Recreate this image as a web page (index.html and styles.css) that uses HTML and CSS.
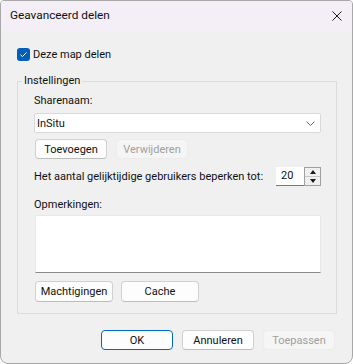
FILE: index.html
```html
<!DOCTYPE html>
<html lang="nl">
<head>
  <meta charset="UTF-8" />
  <title>Geavanceerd delen</title>
  <link rel="stylesheet" href="styles.css">
</head>
<body>
  <div class="dialog">
    <div class="titlebar">
      <span class="title">Geavanceerd delen</span>
      <span class="close">
        <svg width="10" height="10" viewBox="0 0 10 10"><path d="M0.5 0.5 L9.5 9.5 M9.5 0.5 L0.5 9.5" stroke="#1a1a1a" stroke-width="1" fill="none"/></svg>
      </span>
    </div>
    <div class="content">
      <label class="check-row">
        <span class="checkbox">
          <svg width="13" height="13" viewBox="0 0 13 13"><path d="M3.5 6.8 L5.5 8.6 L9.5 4.4" stroke="#fff" stroke-width="1" fill="none"/></svg>
        </span>
        Deze map delen
      </label>

      <fieldset class="group">
        <legend>Instellingen</legend>
        <div class="label">Sharenaam:</div>
        <div class="combo">
          <span>InSitu</span>
          <svg width="9" height="5" viewBox="0 0 9 5"><path d="M0.5 0.5 L4.5 4.5 L8.5 0.5" stroke="#666" stroke-width="1" fill="none"/></svg>
        </div>
        <div class="btn-row">
          <button class="btn">Toevoegen</button>
          <button class="btn" disabled>Verwijderen</button>
        </div>
        <div class="limit-row">
          <span>Het aantal gelijktijdige gebruikers beperken tot:</span>
          <div class="spinner">
            <span class="spin-value">20</span>
            <span class="spin-arrows">
              <span class="arrow up"></span>
              <span class="arrow down"></span>
            </span>
          </div>
        </div>
        <div class="label remarks-label">Opmerkingen:</div>
        <div class="remarks"></div>
        <div class="btn-row wide">
          <button class="btn">Machtigingen</button>
          <button class="btn">Cache</button>
        </div>
      </fieldset>

      <div class="footer">
        <button class="btn default">OK</button>
        <button class="btn">Annuleren</button>
        <button class="btn" disabled>Toepassen</button>
      </div>
    </div>
  </div>
</body>
</html>
```

FILE: styles.css
```css
body {
  margin: 0;
  font-family: Roboto, "Noto Sans", sans-serif;
  font-size: 11px;
  color: #111111;
  background: #ffffff;
}
.dialog {
  width: 353px;
  height: 364px;
  box-sizing: border-box;
  border: 1px solid #a8a8a8;
  border-radius: 4px 4px 8px 8px;
  background: #f0f0f0;
  overflow: hidden;
}
.titlebar {
  height: 30px;
  background: #f4eef6;
  display: flex;
  align-items: center;
  justify-content: space-between;
  padding: 0 10px 0 9px;
}
.title {
  font-size: 11.8px;
  line-height: 16px;
  margin-top: -2px;
}
.close {
  display: flex;
  margin-top: -1px;
}
.content {
  padding: 17px 15px 0 16px;
}
.check-row {
  display: flex;
  align-items: center;
  gap: 3px;
  height: 13px;
  line-height: 16px;
}
.checkbox {
  width: 13px;
  height: 13px;
  border-radius: 3px;
  background: #005fb8;
  display: flex;
}
.group {
  margin: 12px 0 0 0;
  padding: 4px 15px 11px 16px;
  border: 1px solid #dcdcdc;
  min-width: 0;
}
.group legend {
  padding: 0 2px;
  margin-left: -12px;
  line-height: 16px;
}
.label {
  line-height: 16px;
}
.combo {
  margin-top: 4px;
  height: 20px;
  box-sizing: border-box;
  background: #ffffff;
  border: 1px solid #d9d9d9;
  border-radius: 2px;
  display: flex;
  align-items: center;
  justify-content: space-between;
  padding: 0 5px 0 2px;
}
.btn {
  font-family: inherit;
  font-size: 11px;
  color: #111111;
  width: 72px;
  height: 20px;
  padding: 0;
  background: #fdfdfd;
  border: 1px solid #d0d0d0;
  border-bottom-color: #bdbdbd;
  border-radius: 4px;
}
.btn:disabled {
  background: #f5f5f5;
  border-color: #ececec;
  color: #a0a0a0;
}
.btn.default {
  border: 1px solid #0067c0;
}
.btn-row {
  display: flex;
  gap: 9px;
  margin-top: 6px;
  padding-left: 1px;
}
.btn-row.wide {
  margin-top: 8px;
  gap: 8px;
}
.btn-row.wide .btn {
  width: 78px;
  height: 21px;
}
.limit-row {
  margin-top: 8px;
  display: flex;
  align-items: center;
  justify-content: space-between;
  line-height: 16px;
  white-space: nowrap;
}
.spinner {
  display: flex;
  height: 19px;
}
.spin-value {
  width: 28px;
  background: #ffffff;
  border-bottom: 1px solid #7a7a7a;
  box-sizing: border-box;
  padding-left: 5px;
  line-height: 18px;
}
.spin-arrows {
  width: 17px;
  box-sizing: border-box;
  border: 1px solid #a0a0a0;
  background: #f0f0f0;
  display: flex;
  flex-direction: column;
}
.arrow {
  flex: 1;
  display: flex;
  align-items: center;
  justify-content: center;
}
.arrow.up {
  border-bottom: 1px solid #c8c8c8;
}
.arrow.up::before {
  content: "";
  border-left: 3px solid transparent;
  border-right: 3px solid transparent;
  border-bottom: 4px solid #1a1a1a;
}
.arrow.down::before {
  content: "";
  border-left: 3px solid transparent;
  border-right: 3px solid transparent;
  border-top: 4px solid #1a1a1a;
}
.remarks-label {
  margin-top: 11px;
}
.remarks {
  margin: 2px 0 0 1px;
  height: 58px;
  box-sizing: border-box;
  background: #ffffff;
  border: 1px solid #e8e8e8;
  border-bottom-color: #8a8a8a;
}
.footer {
  margin-top: 16px;
  padding-right: 2px;
  display: flex;
  justify-content: flex-end;
  gap: 9px;
}
```
